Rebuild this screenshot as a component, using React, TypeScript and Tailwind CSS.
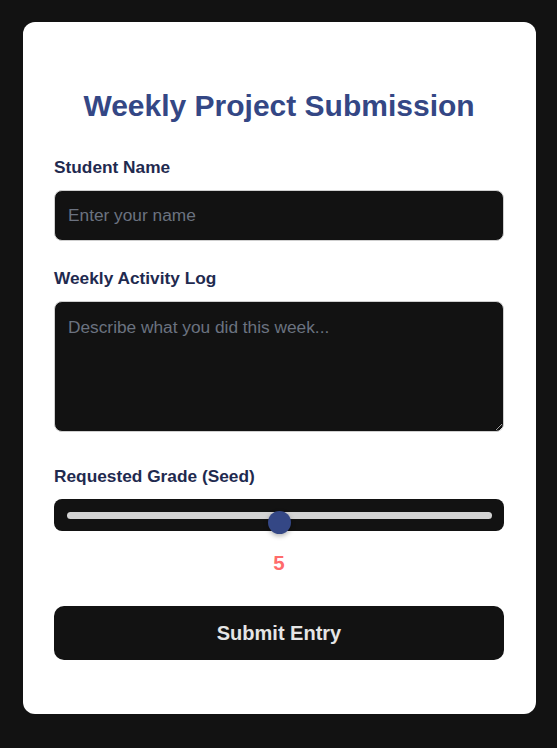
import { useState } from "react";

export default function App() {
  const [grade] = useState(5);
  const pct = (grade / 10) * 100;

  return (
    <div className="min-h-screen bg-[#121212] pt-[22px] pl-[23px] pb-[34px] font-['Liberation_Sans',Arial,sans-serif]">
      <div className="w-[513px] rounded-[12px] bg-white pl-[31px] pr-[32px] pt-[67px] pb-[54px]">
        <h1 className="text-center text-[30px] leading-[34px] font-bold text-[#344785] mb-[34px]">
          Weekly Project Submission
        </h1>

        <label className="block text-[17.3px] leading-[20px] font-bold text-[#1f2a4f] mb-[13px]">
          Student Name
        </label>
        <input
          type="text"
          placeholder="Enter your name"
          className="block w-full h-[51px] rounded-[8px] border border-[#cfcfcf] bg-[#121212] px-[13px] text-[17.3px] text-[#e5e5e5] placeholder:text-[#6b7280] outline-none"
        />

        <label className="block mt-[27px] text-[17.3px] leading-[20px] font-bold text-[#1f2a4f] mb-[13px]">
          Weekly Activity Log
        </label>
        <textarea
          placeholder="Describe what you did this week..."
          className="block w-full h-[131px] rounded-[8px] border border-[#cfcfcf] bg-[#121212] px-[13px] py-[15px] text-[17.3px] leading-[20px] text-[#e5e5e5] placeholder:text-[#6b7280] outline-none"
        />

        <label className="block mt-[34px] text-[17.3px] leading-[20px] font-bold text-[#1f2a4f] mb-[13px]">
          Requested Grade (Seed)
        </label>
        <div className="relative h-[32px] w-full rounded-[8px] bg-[#121212]">
          <div className="absolute left-[13px] right-[12px] top-[13px] h-[7px] rounded-full bg-[#d3d3d3]" />
          <div
            className="absolute top-[12px] h-[23px] w-[23px] -ml-[11.5px] rounded-full bg-[#344785] shadow-[0_2px_5px_rgba(0,0,0,0.3)]"
            style={{ left: `calc(13px + (100% - 25px) * ${pct / 100})` }}
          />
        </div>

        <div className="mt-[20px] text-center text-[20.5px] leading-[23px] font-bold text-[#ff6b6b]">
          {grade}
        </div>

        <button className="mt-[32px] block w-full h-[54px] rounded-[10px] bg-[#121212] text-[20px] font-bold text-[#e5e5e5]">
          Submit Entry
        </button>
      </div>
    </div>
  );
}
